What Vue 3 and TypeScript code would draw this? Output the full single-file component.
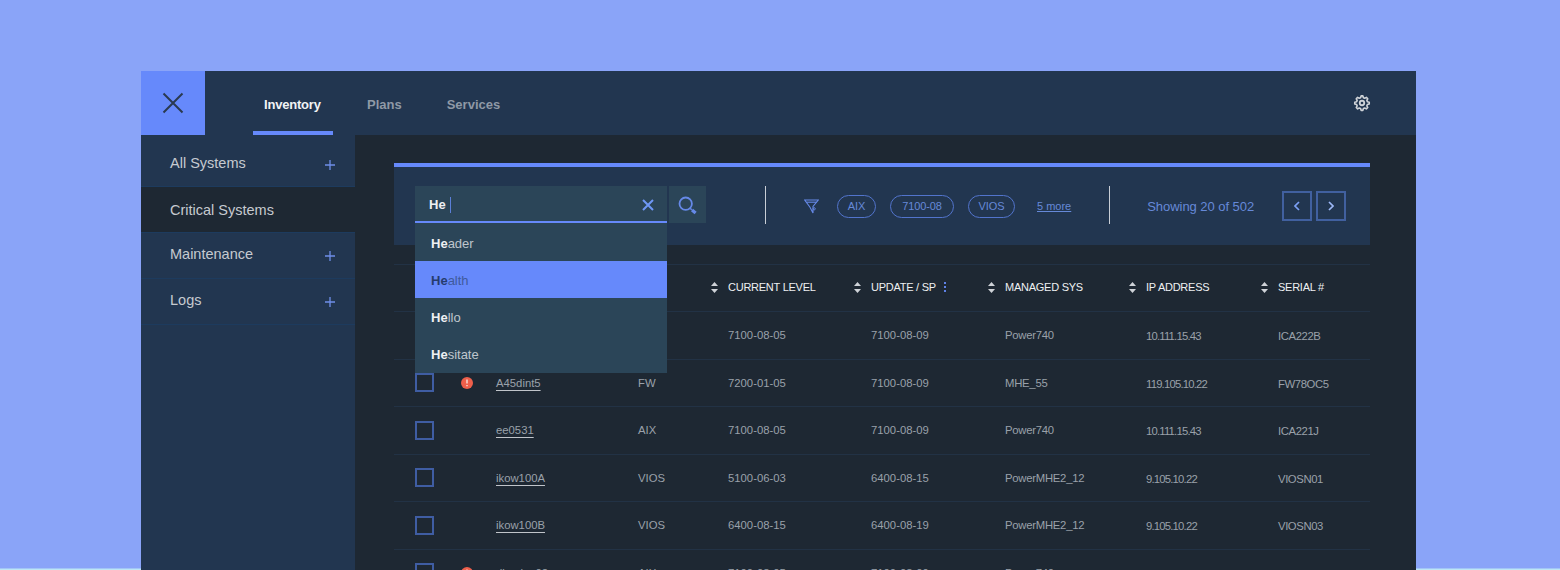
<script setup lang="ts">
interface Row {
  alert: boolean
  name: string
  os: string
  level: string
  update: string
  sys: string
  ip: string
  serial: string
}

const tabs = [
  { label: 'Inventory', active: true },
  { label: 'Plans', active: false },
  { label: 'Services', active: false },
]

const side = [
  { label: 'All Systems', plus: true, active: false },
  { label: 'Critical Systems', plus: false, active: true },
  { label: 'Maintenance', plus: true, active: false },
  { label: 'Logs', plus: true, active: false },
]

const suggestions = [
  { rest: 'ader', active: false },
  { rest: 'alth', active: true },
  { rest: 'llo', active: false },
  { rest: 'sitate', active: false },
]

const chips = [
  { label: 'AIX', width: 39 },
  { label: '7100-08', width: 64 },
  { label: 'VIOS', width: 47 },
]

const headers = [
  { label: 'CURRENT LEVEL', cls: 'c-level', kebab: false },
  { label: 'UPDATE / SP', cls: 'c-update', kebab: true },
  { label: 'MANAGED SYS', cls: 'c-sys', kebab: false },
  { label: 'IP ADDRESS', cls: 'c-ip', kebab: false },
  { label: 'SERIAL #', cls: 'c-serial', kebab: false },
]

const rows: Row[] = [
  { alert: false, name: 'ee0530', os: 'AIX', level: '7100-08-05', update: '7100-08-09', sys: 'Power740', ip: '10.111.15.43', serial: 'ICA222B' },
  { alert: true, name: 'A45dint5', os: 'FW', level: '7200-01-05', update: '7100-08-09', sys: 'MHE_55', ip: '119.105.10.22', serial: 'FW78OC5' },
  { alert: false, name: 'ee0531', os: 'AIX', level: '7100-08-05', update: '7100-08-09', sys: 'Power740', ip: '10.111.15.43', serial: 'ICA221J' },
  { alert: false, name: 'ikow100A', os: 'VIOS', level: '5100-06-03', update: '6400-08-15', sys: 'PowerMHE2_12', ip: '9.105.10.22', serial: 'VIOSN01' },
  { alert: false, name: 'ikow100B', os: 'VIOS', level: '6400-08-15', update: '6400-08-19', sys: 'PowerMHE2_12', ip: '9.105.10.22', serial: 'VIOSN03' },
  { alert: true, name: 'dkoalpa02', os: 'AIX', level: '7100-08-05', update: '7100-08-09', sys: 'Power740', ip: '10.111.15.43', serial: 'ICA222C' },
]
</script>

<template>
  <div class="page">
    <div class="window">
      <header class="topbar">
        <div class="logo">
          <svg width="24" height="24" viewBox="0 0 24 24" fill="none" stroke="#2a3a50" stroke-width="2">
            <path d="M2.5 2.5 21.5 21.5M21.5 2.5 2.5 21.5" />
          </svg>
        </div>
        <nav class="tabs">
          <div v-for="t in tabs" :key="t.label" class="tab" :class="{ active: t.active }">{{ t.label }}</div>
        </nav>
        <svg class="gear" width="18" height="18" viewBox="0 0 24 24" fill="none" stroke="#cfd3d8" stroke-width="2.4" stroke-linejoin="round">
          <path d="M12 2.5l1.3 0 .8 2.7 1.9.8 2.5-1.3 2 2-1.3 2.4.8 2 2.7.8 0 2.6-2.7.8-.8 1.9 1.3 2.5-2 2-2.5-1.3-1.9.8-.8 2.7-2.6 0-.8-2.7-2-.8-2.4 1.3-2-2 1.3-2.5-.8-1.9-2.7-.8 0-2.6 2.7-.8.8-2-1.3-2.4 2-2 2.4 1.3 2-.8.8-2.7z" transform="translate(12 12) scale(.9) translate(-12 -13)" />
          <circle cx="12" cy="12" r="3" />
        </svg>
      </header>

      <div class="body">
        <aside class="sidebar">
          <div v-for="s in side" :key="s.label" class="side-item" :class="{ active: s.active }">
            <span>{{ s.label }}</span>
            <svg v-if="s.plus" class="plus" width="10" height="10" viewBox="0 0 10 10" stroke="#6f8fe8" stroke-width="1.3">
              <path d="M5 0v10M0 5h10" />
            </svg>
          </div>
        </aside>

        <main class="main">
          <section class="toolbar">
            <div class="search-wrap">
              <div class="search">
                <span class="typed">He</span>
                <span class="caret"></span>
                <svg class="clear" width="12" height="12" viewBox="0 0 12 12" stroke="#6f97f5" stroke-width="2">
                  <path d="M1 1l10 10M11 1 1 11" />
                </svg>
              </div>
              <ul class="dropdown">
                <li v-for="o in suggestions" :key="o.rest" class="option" :class="{ active: o.active }">
                  <b>He</b>{{ o.rest }}
                </li>
              </ul>
            </div>
            <button class="search-btn" type="button" aria-label="Search">
              <svg width="20" height="20" viewBox="0 0 20 20" fill="none" stroke="#6689e8">
                <circle cx="7.7" cy="7.7" r="6.2" stroke-width="1.8" />
                <path d="M12.2 12.4l1.6 1.4" stroke-width="1.4" />
                <path d="M14 14l3.6 3" stroke-width="3.2" />
              </svg>
            </button>
            <div class="divider first"></div>
            <svg class="funnel" width="15" height="15" viewBox="0 0 15 15" fill="none" stroke="#6689e8" stroke-width="1.1">
              <path d="M.7 1h13.6L9 7.4v6.6L6 8.2z" />
              <path d="M2.4 3.2h10.2" />
              <circle cx="10.2" cy="9.8" r="1.1" stroke-width=".9" />
            </svg>
            <div class="chips">
              <span v-for="c in chips" :key="c.label" class="chip" :style="{ width: c.width + 'px' }">{{ c.label }}</span>
            </div>
            <a class="more">5 more</a>
            <div class="divider second"></div>
            <span class="showing">Showing 20 of 502</span>
            <div class="pager">
              <button class="page-btn" type="button" aria-label="Previous">
                <svg width="6" height="10" viewBox="0 0 6 10" fill="none" stroke="#7ca0f5" stroke-width="1.7"><path d="M5 1 1 5l4 4" /></svg>
              </button>
              <button class="page-btn" type="button" aria-label="Next">
                <svg width="6" height="10" viewBox="0 0 6 10" fill="none" stroke="#9db8f7" stroke-width="1.7"><path d="M1 1l4 4-4 4" /></svg>
              </button>
            </div>
          </section>

          <section class="table">
            <div class="row head">
              <span class="c-check"></span>
              <span class="c-alert"></span>
              <span class="c-name"></span>
              <span class="c-os"></span>
              <span v-for="h in headers" :key="h.label" class="hcell" :class="h.cls">
                <svg class="sort" width="7" height="11" viewBox="0 0 7 11" fill="#cfd3d8">
                  <path d="M3.5 0 7 4H0zM3.5 11 0 7h7z" />
                </svg>
                {{ h.label }}
                <svg v-if="h.kebab" class="kebab" width="2" height="10" viewBox="0 0 2 10" fill="#5f82e6">
                  <rect y="0" width="2" height="2" /><rect y="4" width="2" height="2" /><rect y="8" width="2" height="2" />
                </svg>
              </span>
            </div>
            <div v-for="r in rows" :key="r.name" class="row">
              <span class="c-check"><i class="box"></i></span>
              <span class="c-alert">
                <svg v-if="r.alert" width="12" height="12" viewBox="0 0 12 12">
                  <circle cx="6" cy="6" r="6" fill="#ee5f4b" />
                  <path d="M6 2.6v4M6 8v1.3" stroke="#f7e3dd" stroke-width="1.4" />
                </svg>
              </span>
              <span class="c-name"><a class="link">{{ r.name }}</a></span>
              <span class="c-os">{{ r.os }}</span>
              <span class="c-level">{{ r.level }}</span>
              <span class="c-update">{{ r.update }}</span>
              <span class="c-sys">{{ r.sys }}</span>
              <span class="c-ip">{{ r.ip }}</span>
              <span class="c-serial">{{ r.serial }}</span>
            </div>
          </section>
        </main>
      </div>
    </div>
  </div>
</template>

<style>
html,
body {
  margin: 0;
  background: #8aa4f8;
}
</style>

<style scoped>
.page {
  box-sizing: border-box;
  width: 1560px;
  height: 570px;
  overflow: hidden;
  padding: 71px 144px 0 141px;
  background: linear-gradient(#8aa4f8 568px, #bce6f5 569px);
  font-family: "Liberation Sans", Arial, sans-serif;
  color: #c8ccd1;
}
.window {
  width: 1275px;
  height: 560px;
  display: flex;
  flex-direction: column;
  background: #1e2833;
}
.topbar {
  height: 64px;
  flex: none;
  display: flex;
  align-items: center;
  background: #223650;
}
.logo {
  width: 64px;
  height: 64px;
  display: flex;
  align-items: center;
  justify-content: center;
  background: #6689fb;
}
.tabs {
  display: flex;
  height: 64px;
  margin-left: 48px;
}
.tab {
  box-sizing: border-box;
  height: 64px;
  padding: 26px 11px 0;
  margin-right: 23px;
  font-size: 13px;
  font-weight: 700;
  color: #8f99a6;
}
.tab.active {
  width: 80px;
  letter-spacing: -0.2px;
  color: #f1f3f5;
  border-bottom: 4px solid #6689fb;
}
.gear {
  margin-left: auto;
  margin-right: 45px;
}
.body {
  display: flex;
  flex: 1;
  min-height: 0;
}
.sidebar {
  width: 214px;
  flex: none;
  background: #223650;
}
.side-item {
  box-sizing: border-box;
  height: 46px;
  padding: 0 20px 4px 29px;
  display: flex;
  align-items: center;
  justify-content: space-between;
  font-size: 14.5px;
  color: #c6cad0;
  border-bottom: 1px solid #1d3b5e;
}
.side-item:first-child {
  height: 52px;
  padding-top: 5px;
  padding-bottom: 0;
}
.side-item.active {
  background: #1e2833;
  padding-bottom: 0;
}
.plus {
  margin-top: 5px;
}
.side-item:first-child .plus {
  margin-top: 3px;
}
.main {
  flex: 1;
  min-width: 0;
  padding: 28px 46px 0 39px;
}
.toolbar {
  box-sizing: border-box;
  height: 82px;
  display: flex;
  align-items: center;
  padding: 0 24px 0 21px;
  background: #223650;
  border-top: 4px solid #6689fb;
}
.search-wrap {
  position: relative;
  width: 252px;
  height: 37px;
  align-self: flex-start;
  margin-top: 19px;
}
.search {
  box-sizing: border-box;
  height: 37px;
  padding: 2px 13px 0 14px;
  display: flex;
  align-items: center;
  background: #2b4558;
  border-bottom: 2px solid #6689fb;
}
.typed {
  font-size: 13px;
  font-weight: 700;
  color: #eef0f2;
}
.caret {
  width: 1px;
  height: 16px;
  margin-left: 4px;
  background: #5b7fd8;
}
.clear {
  margin-left: auto;
}
.dropdown {
  position: absolute;
  z-index: 2;
  top: 37px;
  left: 0;
  width: 252px;
  margin: 0;
  padding: 1px 0 0;
  list-style: none;
  background: #2b4558;
}
.option {
  box-sizing: border-box;
  height: 37.2px;
  padding: 1px 0 0 16px;
  display: flex;
  align-items: center;
  font-size: 13px;
  color: #bfc5cc;
}
.option b {
  color: #eef0f2;
}
.option.active {
  background: #6689fb;
  color: #3f5a9c;
}
.option.active b {
  color: #263c6e;
}
.search-btn {
  width: 37px;
  height: 37px;
  align-self: flex-start;
  margin: 19px 0 0 2px;
  padding: 2px 0 0;
  display: flex;
  align-items: center;
  justify-content: center;
  border: 0;
  background: #2b4558;
}
.divider {
  width: 1px;
  height: 38px;
  flex: none;
  margin-bottom: 3px;
  background: #c9ced6;
}
.divider.first {
  margin-left: 59px;
}
.funnel {
  margin-left: 38px;
}
.chips {
  display: flex;
  gap: 14px;
  margin-left: 18px;
}
.chip {
  box-sizing: border-box;
  height: 23px;
  display: flex;
  align-items: center;
  justify-content: center;
  font-size: 11px;
  letter-spacing: -0.1px;
  color: #6689d8;
  border: 1px solid #5274cc;
  border-radius: 12px;
}
.more {
  margin-left: 22px;
  font-size: 11px;
  color: #6689d8;
  text-decoration: underline;
}
.divider.second {
  margin-left: 38px;
}
.showing {
  margin-left: 37px;
  font-size: 13px;
  letter-spacing: -0.05px;
  color: #6689d8;
}
.pager {
  display: flex;
  gap: 4px;
  margin-left: auto;
}
.page-btn {
  box-sizing: border-box;
  width: 30px;
  height: 30px;
  padding: 0;
  display: flex;
  align-items: center;
  justify-content: center;
  background: transparent;
  border: 2px solid #41609f;
}
.table {
  margin-top: 19px;
}
.row {
  box-sizing: border-box;
  height: 47.5px;
  display: flex;
  align-items: center;
  font-size: 11.3px;
  color: #9aa1aa;
  border-bottom: 1px solid #223245;
}
.row.head {
  height: 48px;
  padding-bottom: 2px;
  border-top: 1px solid #223245;
  color: #eef0f2;
  font-size: 11px;
  letter-spacing: -0.25px;
}
.c-check { width: 62px; padding-left: 21px; box-sizing: border-box; flex: none; display: flex; }
.c-alert { width: 40px; padding-left: 5px; box-sizing: border-box; flex: none; display: flex; }
.c-name { width: 142px; flex: none; }
.c-os { width: 90px; flex: none; }
.c-level { width: 143px; flex: none; }
.c-update { width: 134px; flex: none; }
.c-sys { width: 141px; flex: none; letter-spacing: -0.25px; }
.c-ip { width: 132px; flex: none; letter-spacing: -0.8px; padding-top: 2px; }
.c-serial { flex: 1; letter-spacing: -0.4px; padding-top: 2px; }
.row.head .c-ip,
.row.head .c-serial {
  padding-top: 0;
  letter-spacing: -0.25px;
}
.hcell {
  position: relative;
  display: block;
}
.sort {
  position: absolute;
  left: -17px;
  top: 1px;
}
.kebab {
  margin-left: 5px;
  vertical-align: -1px;
}
.box {
  display: block;
  width: 19px;
  height: 19px;
  box-sizing: border-box;
  border: 2px solid #3f5da3;
}
.link {
  color: #9aa1aa;
  text-decoration: underline;
  text-decoration-color: #c0c4ca;
  text-underline-offset: 3px;
}
</style>
